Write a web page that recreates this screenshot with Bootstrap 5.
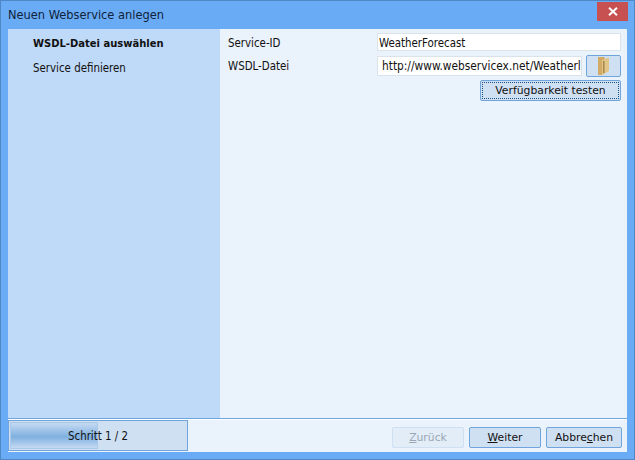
<!DOCTYPE html>
<html lang="de"><head><meta charset="utf-8"><title>Neuen Webservice anlegen</title>
<link href="https://cdn.jsdelivr.net/npm/bootstrap@5.3.0/dist/css/bootstrap.min.css" rel="stylesheet">
<style>
html,body{margin:0;height:460px;overflow:hidden}
body{font-family:"DejaVu Sans","Noto Sans",sans-serif;font-stretch:condensed;font-size:11.4px;line-height:16px;color:#111;background:#69abf5}
.win{width:635px;height:460px;border:1px solid #4f86c4;background:#69abf5}
.tbar{height:28px;padding-left:7px}
.ttext{font-size:12.7px;color:#10233a;padding-top:6px}
.xbtn{width:31px;height:19px;margin-top:1px;margin-right:6px;background:#c75050;border:0;padding:0}
.client{width:619px;height:423px;margin-left:7px;background:#fff}
.upper{height:389px;background:#eaf2fb}
.side{width:212px;background:#bfd9f8;padding:7px 0 0 25px}
.side div{height:24px}
.side .stepb{font-size:11.1px;font-weight:700}
.pane{padding:4px 6px 0 8px;width:407px}
.lbl{width:149px;padding-top:2px}
.lbl2{padding-top:0;width:149px}
.fld{height:18px;border:1px solid #dbe3ea;background:#fff;padding:1px 0 0 1px;line-height:16px;overflow:hidden;white-space:nowrap;color:#111}
.fld2{height:20px;padding:1px 1px 0 4px;width:205px;font-size:11.8px}
.wbtn{background:#cfe0f3;border:1px solid #6fa5dc;border-radius:2px;color:#111;font-size:10.8px;line-height:16px;padding:0;text-align:center}
.fbtn{width:35px;height:22px;margin-left:4px}
.testb{width:141px;height:21px;position:relative;margin-top:3px}
.testb span{display:block;margin:1px;border:1px dotted #1c4f8c;height:17px;line-height:15px}
.sep{height:2px;background:#fff;border-top:1px solid #6fa5dc}
.foot{height:32px;background:#eaf2fb;padding-right:5px}
.prog{width:180px;height:31px;border:1px solid #6fa5dc;background:#cfe0f3;position:relative;padding:1px}
.pfill{width:88px;height:27px;border:1px solid #a9c8ea;background:linear-gradient(#c5daf2,#7fb0e0 55%,#c5daf2)}
.ptxt{position:absolute;left:0;right:0;top:7px;text-align:center}
.fbar{width:72px;height:21px;margin-top:7px;margin-left:5px}
.fbar.w3{width:76px}
.fbar:disabled{opacity:1;background:#e2edf8;border-color:#cfe0f3;color:#9aa6b2}
</style></head><body>
<div class="win d-flex flex-column">
 <div class="tbar d-flex justify-content-between align-items-start">
  <div class="ttext">Neuen Webservice anlegen</div>
  <button class="xbtn d-flex align-items-center justify-content-center" aria-label="Schließen"><svg width="10" height="9" viewBox="0 0 10 9"><path d="M1 .8 9 8.2M9 .8 1 8.2" stroke="#fff" stroke-width="2"/></svg></button>
 </div>
 <div class="client d-flex flex-column">
  <div class="upper d-flex">
   <div class="side"><div class="stepb">WSDL-Datei auswählen</div><div>Service definieren</div></div>
   <div class="pane">
    <div class="d-flex align-items-start"><div class="lbl">Service-ID</div><div class="fld flex-grow-1">WeatherForecast</div></div>
    <div class="d-flex align-items-center mt-1"><div class="lbl2">WSDL-Datei</div><div class="fld fld2">http://www.webservicex.net/Weatherl</div>
     <button class="wbtn fbtn d-flex align-items-center justify-content-center" aria-label="Durchsuchen"><svg width="12" height="18" viewBox="0 0 12 18"><path d="M0 0h6l1 1.500V16l-3 2H0z" fill="#d2ac66"/><path d="M4 3l7-2.500V14l-7 4z" fill="#e2c688"/><path d="M5 4h1.500v12H5z" fill="#a5864c"/></svg></button></div>
    <div class="d-flex justify-content-end"><button class="wbtn testb"><span>Verfügbarkeit testen</span></button></div>
   </div>
  </div>
  <div class="sep"></div>
  <div class="foot d-flex align-items-start">
   <div class="prog"><div class="pfill"></div><div class="ptxt">Schritt 1 / 2</div></div>
   <div class="ms-auto d-flex">
    <button class="wbtn fbar" disabled><u>Z</u>urück</button>
    <button class="wbtn fbar"><u>W</u>eiter</button>
    <button class="wbtn fbar w3">Abbre<u>c</u>hen</button>
   </div>
  </div>
 </div>
</div>
</body></html>
